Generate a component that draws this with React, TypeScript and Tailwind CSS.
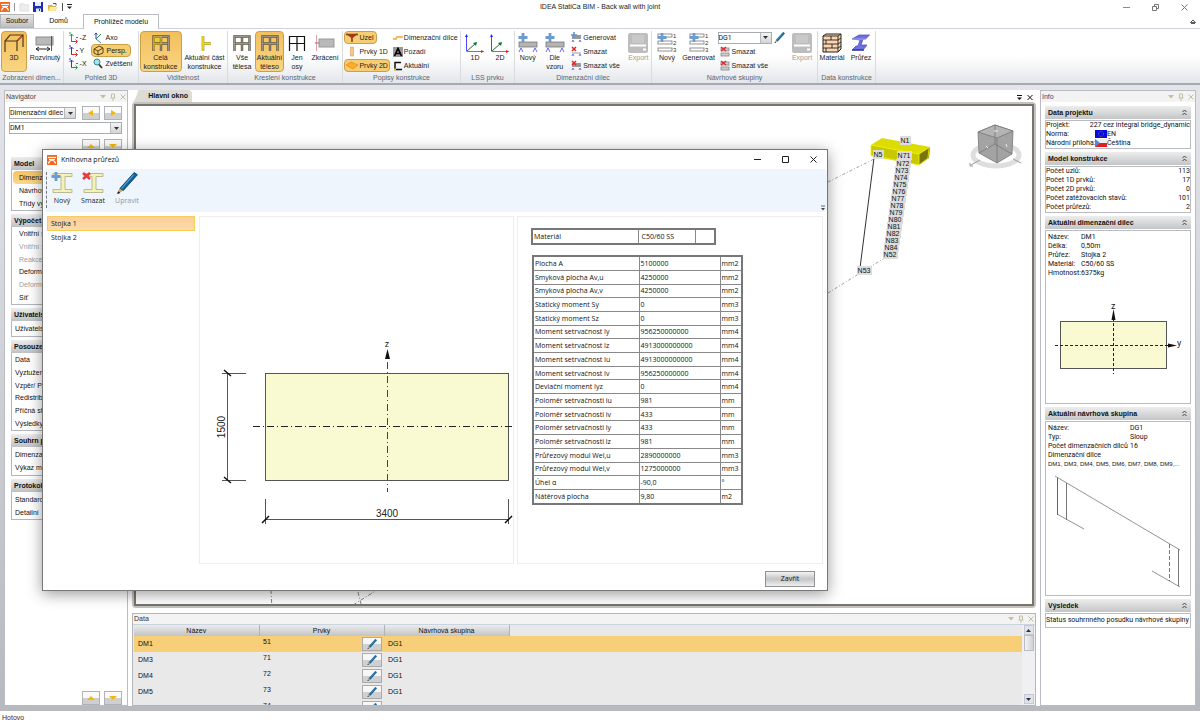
import React from 'react';

type IconProps = { children: React.ReactNode; w?: number; h?: number };

const Svg = ({ children, w = 20, h = 20 }: IconProps) => (
  <svg width={w} height={h} viewBox={`0 0 ${w} ${h}`} fill="none" className="shrink-0" aria-hidden="true">
    {children}
  </svg>
);

/* ---------- icons ---------- */

const Logo = () => (
  <Svg w={10} h={10}>
    <rect width="10" height="10" fill="#f26a21" />
    <path d="M1 2.500h8" stroke="#fff" strokeWidth="1.200" />
    <path d="M1.500 8.500C2 6.500 3.500 5.200 5 5c1.500 0.200 3 1.500 3.500 3.500M2 4.500h6" stroke="#fff" strokeWidth="1.100" />
  </Svg>
);

const PortalIcon = () => (
  <Svg>
    <path d="M1 19V8l5-6h13v12M1 8h12v10M13 8l6-6" stroke="#4a3a1e" strokeWidth="1.2" />
    <path d="M14 7l4-4" stroke="#e23a1c" strokeWidth="1.2" />
  </Svg>
);

const UnrolledIcon = () => (
  <Svg>
    <rect x="1" y="4" width="17" height="8" fill="#b9b9b9" stroke="#8d8d8d" />
    <path d="M1 16h14M4 14l-3 2 3 2M12 14l3 2-3 2" stroke="#222" />
    <path d="M16.500 3v15" stroke="#d22" />
  </Svg>
);

const AxisIcon = ({ up, side }: { up: string; side: string }) => (
  <Svg w={12} h={12}>
    <path d="M3.500 10V2M1.500 4l2-2 2 2M1 1h2" stroke={up} />
    <path d="M3 9.500h6M7.500 7.500l2 2-2 2" stroke={side} />
    <path d="M8 5.500h2" stroke={side} />
  </Svg>
);

const AxoIcon = () => (
  <Svg w={10} h={12}>
    <path d="M3 7V1M1.500 2.500L3 1l1.500 1.500" stroke="#33c" />
    <path d="M3 7l5-5" stroke="#2a8a4a" />
    <path d="M3 7l5 4" stroke="#48a" />
  </Svg>
);

const CubeIcon = () => (
  <Svg w={11} h={11}>
    <path d="M1 4l5-3 4 2v5l-5 2-4-2zM1 4l4 2 5-3M5 6v4" stroke="#5a4210" />
  </Svg>
);

const ZoomIcon = () => (
  <Svg w={10} h={11}>
    <circle cx="4" cy="4" r="3" fill="#9fe6ee" stroke="#3a8790" />
    <path d="M6 6.500l3 3.500" stroke="#333" strokeWidth="1.800" />
  </Svg>
);

const FrameIcon = ({ fill, thin }: { fill?: string; thin?: boolean }) => (
  <Svg>
    {fill && <path d="M3 4h7v7H3z" fill={fill} />}
    <path d="M2.500 18V3.500h15V18M2.500 10.500h15M10 3v15" stroke={thin ? '#111' : '#5c5646'} strokeWidth={thin ? 1.2 : 2.4} />
    {!thin && <path d="M2.500 18V3.500h15V18M2.500 10.500h15M10 3v15" stroke="#b5ae9b" strokeWidth="0.700" />}
    {fill && <path d="M3 17V4h7v7H3" stroke="#d6b400" strokeWidth="1.200" />}
  </Svg>
);

const PartIcon = () => (
  <Svg>
    <path d="M8 3v15M8 10.500h8" stroke="#a08c00" strokeWidth="2.600" />
    <path d="M8 3v15M8 10.500h8" stroke="#f2d92c" strokeWidth="1.600" />
  </Svg>
);

const ShortenIcon = () => (
  <Svg>
    <rect x="4" y="6" width="15" height="8" fill="#b9b9b9" stroke="#999" />
    <path d="M1.500 2v16" stroke="#e9a0a0" />
    <path d="M0 10h4" stroke="#777" />
  </Svg>
);

const NodeIcon = () => (
  <Svg w={12} h={11}>
    <path d="M0 2.500h12M6 3v7M1 2l5 3 5-3" stroke="#7b4a13" strokeWidth="1.600" />
    <circle cx="6" cy="4" r="2" fill="#d3201b" />
  </Svg>
);

const Member1DIcon = () => (
  <Svg w={12} h={11}>
    <rect x="4.500" y="1" width="3" height="9" fill="#f4c585" stroke="#dba060" strokeWidth="0.600" />
  </Svg>
);

const Member2DIcon = () => (
  <Svg w={12} h={11}>
    <path d="M0 5l5-3 7 3-5 4z" fill="#ffab2e" stroke="#e08a10" strokeWidth="0.700" />
  </Svg>
);

const MemberIcon = () => (
  <Svg w={11} h={10}>
    <path d="M0 6h3l1-2h6" stroke="#f5b964" strokeWidth="2" />
  </Svg>
);

const BackgroundIcon = () => (
  <Svg w={10} h={10}>
    <rect width="10" height="10" fill="#9a9a9a" />
    <path d="M1.500 9L5 1.500 8.500 9M3 6.500h4" stroke="#000" strokeWidth="1.700" />
  </Svg>
);

const ActiveIcon = () => (
  <Svg w={10} h={10}>
    <path d="M8 1.500H2v7h7" stroke="#111" strokeWidth="1.500" />
    <path d="M1 8.500h2" stroke="#e7c500" strokeWidth="2" />
  </Svg>
);

const TripodIcon = () => (
  <Svg>
    <path d="M1.500 18V2" stroke="#4a4af0" />
    <path d="M1.500 18.500h17" stroke="#f04a4a" />
    <path d="M2 18l9-8" stroke="#226c2c" />
    <path d="M0 4l1.500-3L3 4z" fill="#22f" />
    <path d="M16 17l3 1.500-3 1.500z" fill="#f11" />
    <path d="M8 10l4-1-1 4z" fill="#074" />
  </Svg>
);

const Plus = () => <path d="M5 0v9M0.500 4.500h9" stroke="#6b9bd1" strokeWidth="2.800" />;
const Cross = () => <path d="M1 1l7 6M8 1L1 7" stroke="#ea3a3e" strokeWidth="2.600" />;

const BeamIcon = () => (
  <Svg>
    <rect x="1" y="9" width="18" height="5" fill="#b4b4b4" stroke="#777" strokeWidth="0.800" />
    <path d="M1 19l2-4 2 4M15 19l2-4 2 4" stroke="#55e" strokeWidth="0.900" />
    <Plus />
  </Svg>
);

const SmallBeamIcon = ({ kind }: { kind: 'add' | 'del' | 'all' }) => (
  <Svg w={11} h={11}>
    {kind === 'del' ? <path d="M1 7h9" stroke="#999" /> : <rect x="1" y="3" width="9" height="4" fill="#999" />}
    <path d="M1 10l1-2 1 2M8 10l1-2 1 2" stroke="#55e" strokeWidth="0.800" />
    {kind === 'add' ? <path d="M3 0v6M0 3h6" stroke="#5f94cf" strokeWidth="1.600" /> : <path d="M1 1l4 4M5 1L1 5" stroke="#e3262b" strokeWidth="1.500" />}
  </Svg>
);

const ExportIcon = () => (
  <Svg>
    <rect width="20" height="20" rx="2" fill="#bdbdbd" />
    <path d="M4 2h12v8H4z" fill="#c9c9c9" />
    <path d="M2 12.500h16" stroke="#fff" strokeWidth="2" />
    <path d="M15 16.500h3" stroke="#fff" strokeWidth="2" />
  </Svg>
);

const GroupsIcon = () => (
  <Svg>
    {[3, 10, 17].map((y, i) => (
      <g key={y}>
        <rect x="1" y={y - 2} width="14" height="3" fill="#fff" stroke="#777" strokeWidth="0.800" />
        <text x="16" y={y + 2} fontSize="6" fill="#333">{i + 1}</text>
      </g>
    ))}
    <Plus />
  </Svg>
);

const GroupDeleteIcon = () => (
  <Svg w={11} h={11}>
    <rect x="1" y="2" width="8" height="3" fill="#ccc" stroke="#888" strokeWidth="0.800" />
    <rect x="1" y="7" width="8" height="3" fill="#ccc" stroke="#888" strokeWidth="0.800" />
    <path d="M1 1l5 4M6 1L1 5" stroke="#e3262b" strokeWidth="1.400" />
  </Svg>
);

const PencilIcon = ({ size = 11 }: { size?: number }) => (
  <svg width={size} height={size} viewBox="0 0 20 20" className="shrink-0" aria-hidden="true">
    <path d="M16.500 0.500l3 2L6.500 17l-3-2z" fill="#12659c" stroke="#0b4169" strokeWidth="0.800" />
    <path d="M16 2.500L5 15" stroke="#5ba6d8" />
    <path d="M3 15l3.500 2L1 20z" fill="#c9a46a" />
    <path d="M2 17.500L4 19l-3 1z" fill="#111" />
  </svg>
);

const BrickIcon = () => (
  <Svg>
    <path d="M1 3l3-2h15v15l-3 3H1z" fill="#fcd5b0" stroke="#222" />
    <path d="M1 7h15M1 11h15M1 15h15M16 3v16M1 3h15M9 3v4M4 7v4M10 11v4M4 15v4M16 7l3-2M16 11l3-2M16 15l3-2M16 3l3-2" stroke="#222" strokeWidth="0.900" />
  </Svg>
);

const ProfileIcon = () => (
  <Svg>
    <path d="M1 6l7-4h11l-4 4h-3l-2 6h6l-4 5H1l4-4h2l2-6z" fill="#6f6fe0" stroke="#4545b4" strokeWidth="0.700" />
    <path d="M1 6h14l4-4" stroke="#a9a9f5" />
    <path d="M1 17h12" stroke="#3a3aa0" strokeWidth="1.500" />
  </Svg>
);

const SectionIcon = ({ mark }: { mark: 'add' | 'del' }) => (
  <Svg w={23} h={22}>
    <path d="M2 1.500h19v3h-7v13h7v3H2v-3h8v-13H2z" fill="#f4f2b4" stroke="#b5b38c" strokeWidth="0.900" />
    {mark === 'add' ? <Plus /> : <Cross />}
  </Svg>
);

const Triangle = ({ d, color = '#333' }: { d: 'up' | 'down' | 'left' | 'right'; color?: string }) => {
  const path = { up: 'M0 5l4-4 4 4z', down: 'M0 1h8L4 5z', left: 'M1 3l5-3v6z', right: 'M7 3L2 0v6z' }[d];
  return (
    <svg width="8" height="6" viewBox="0 0 8 6" aria-hidden="true"><path d={path} fill={color} /></svg>
  );
};

const Caret = () => (
  <svg width="5" height="3" viewBox="0 0 5 3" aria-hidden="true"><path d="M0 0h5L2.500 3z" fill="#333" /></svg>
);

const PaneTools = () => (
  <div className="flex items-center gap-1">
    <button aria-label="Menu"><svg width="6" height="8" viewBox="0 0 6 8"><path d="M0 2h6L3 5.500z" fill="#c3bfa3" /></svg></button>
    <button aria-label="Pin"><svg width="6" height="8" viewBox="0 0 6 8" fill="none"><path d="M1.500 5V1h3v4M0.500 5h5M3 5v3" stroke="#c3bfa3" /></svg></button>
    <button aria-label="Close pane"><svg width="6" height="8" viewBox="0 0 6 8"><path d="M0.500 1.500l5 5M5.500 1.500l-5 5" stroke="#c3bfa3" /></svg></button>
  </div>
);

/* ---------- controls ---------- */

const Combo = ({ label, value, className = '' }: { label: string; value: string; className?: string }) => (
  <div className={`relative flex h-3 border border-[#a9adb2] bg-white ${className}`}>
    <select aria-label={label} className="w-full appearance-none bg-transparent font-['Roboto',sans-serif] text-[7px] leading-[10px] outline-none">
      <option>{value}</option>
    </select>
    <span className="pointer-events-none absolute inset-y-0 right-0 flex w-[11px] items-center justify-center border-l border-[#b6b9bd] bg-gradient-to-b from-[#f4f4f4] to-[#d2d4d6]">
      <Caret />
    </span>
  </div>
);

const RibbonGroup = ({ title, className, children }: { title: string; className: string; children: React.ReactNode }) => (
  <section className={`flex shrink-0 flex-col border-r border-[#d9dbdf] ${className}`}>
    <div className="flex h-[41px] justify-center gap-px">{children}</div>
    <h2 className="truncate text-center leading-[11px] text-[#5b6472]">{title}</h2>
  </section>
);

type BtnProps = { label: string; icon: React.ReactNode; on?: boolean; off?: boolean; className?: string };

const BigButton = ({ label, icon, on, off, className = '' }: BtnProps) => (
  <button
    className={`flex flex-col items-center border pt-px leading-[9px] ${on ? 'rounded-sm border-[#c9a044] bg-gradient-to-b from-[#f3bf5c] to-[#f9d582]' : 'border-transparent'} ${off ? 'text-[#9b9b9b]' : 'text-[#222]'} ${className}`}
  >
    {icon}
    <span>{label}</span>
  </button>
);

const SmallButton = ({ label, icon, on, className = '' }: BtnProps) => (
  <button
    className={`flex h-[13px] items-center self-start whitespace-nowrap border pl-px leading-[9px] text-[#222] ${on ? 'rounded-sm border-[#c9a044] bg-[#f7cd74]' : 'border-transparent'} ${className}`}
  >
    {icon}
    <span>{label}</span>
  </button>
);

const ArrowButton = ({ d, label }: { d: 'up' | 'down' | 'left' | 'right'; label: string }) => (
  <button aria-label={label} className="flex h-[14px] w-[18px] items-center justify-center border border-[#b0b2b5] bg-gradient-to-b from-[#fafafa] from-50% to-[#cfcfcf] to-50%">
    <Triangle d={d} color="#f2b90c" />
  </button>
);

const Ribbon = () => (
  <div className="flex border-b-2 border-[#a6aab0] bg-gradient-to-b from-white via-white to-[#e3e6ea] pt-[2px]">
    <RibbonGroup title="Zobrazení dimen..." className="w-16">
      <BigButton on label="3D" icon={<PortalIcon />} className="w-[26px]" />
      <BigButton label="Rozvinutý" icon={<UnrolledIcon />} className="w-[34px]" />
    </RibbonGroup>
    <RibbonGroup title="Pohled 3D" className="w-[75px]">
      <div className="flex flex-col">
        <SmallButton label="-Z" icon={<AxisIcon up="#2a9a4a" side="#d33" />} className="w-6" />
        <SmallButton label="Y" icon={<AxisIcon up="#33c" side="#d33" />} className="w-6" />
        <SmallButton label="-X" icon={<AxisIcon up="#33c" side="#2a9a4a" />} className="w-6" />
      </div>
      <div className="flex flex-col">
        <SmallButton label="Axo" icon={<AxoIcon />} className="gap-[3px]" />
        <SmallButton on label="Persp." icon={<CubeIcon />} className="gap-[3px] pr-[3px]" />
        <SmallButton label="Zvětšení" icon={<ZoomIcon />} className="gap-[3px] pr-[3px]" />
      </div>
    </RibbonGroup>
    <RibbonGroup title="Viditelnost" className="w-[89px]">
      <BigButton on label="Celá konstrukce" icon={<FrameIcon fill="#f0c93a" />} className="w-[42px]" />
      <BigButton label="Aktuální část konstrukce" icon={<PartIcon />} className="w-[44px]" />
    </RibbonGroup>
    <RibbonGroup title="Kreslení konstrukce" className="w-[115px]">
      <BigButton label="Vše tělesa" icon={<FrameIcon />} className="w-6" />
      <BigButton on label="Aktuální těleso" icon={<FrameIcon />} className="w-[29px]" />
      <BigButton label="Jen osy" icon={<FrameIcon thin />} className="w-6 px-1" />
      <BigButton label="Zkrácení" icon={<ShortenIcon />} className="w-[30px]" />
    </RibbonGroup>
    <RibbonGroup title="Popisy konstrukce" className="w-[118px]">
      <div className="flex flex-col gap-px">
        <SmallButton on label="Uzel" icon={<NodeIcon />} className="gap-px pr-[3px]" />
        <SmallButton label="Prvky 1D" icon={<Member1DIcon />} className="gap-px" />
        <SmallButton on label="Prvky 2D" icon={<Member2DIcon />} className="gap-px pr-px" />
      </div>
      <div className="flex flex-col gap-px">
        <SmallButton label="Dimenzační dílce" icon={<MemberIcon />} />
        <SmallButton label="Pozadí" icon={<BackgroundIcon />} className="gap-px" />
        <SmallButton label="Aktuální" icon={<ActiveIcon />} className="gap-px" />
      </div>
    </RibbonGroup>
    <RibbonGroup title="LSS prvku" className="w-[54px]">
      <BigButton label="1D" icon={<TripodIcon />} className="w-6" />
      <BigButton label="2D" icon={<TripodIcon />} className="w-6" />
    </RibbonGroup>
    <RibbonGroup title="Dimenzační dílec" className="w-[137px]">
      <BigButton label="Nový" icon={<BeamIcon />} className="w-[25px]" />
      <BigButton label="Dle vzoru" icon={<BeamIcon />} className="w-[27px] px-1" />
      <div className="flex flex-col gap-px">
        <SmallButton label="Generovat" icon={<SmallBeamIcon kind="add" />} className="gap-px" />
        <SmallButton label="Smazat" icon={<SmallBeamIcon kind="del" />} className="gap-px" />
        <SmallButton label="Smazat vše" icon={<SmallBeamIcon kind="all" />} className="gap-px pr-1" />
      </div>
      <BigButton off label="Export" icon={<ExportIcon />} className="w-[25px]" />
    </RibbonGroup>
    <RibbonGroup title="Návrhové skupiny" className="w-[166px]">
      <BigButton label="Nový" icon={<GroupsIcon />} className="w-[25px]" />
      <BigButton label="Generovat" icon={<GroupsIcon />} className="w-[36px]" />
      <div className="flex flex-col gap-px">
        <div className="flex h-[13px] items-center gap-[2px]">
          <Combo label="Návrhová skupina" value="DG1" className="w-[54px]" />
          <button aria-label="Přejmenovat"><PencilIcon /></button>
        </div>
        <SmallButton label="Smazat" icon={<GroupDeleteIcon />} className="gap-px" />
        <SmallButton label="Smazat vše" icon={<GroupDeleteIcon />} className="gap-px" />
      </div>
      <BigButton off label="Export" icon={<ExportIcon />} className="ml-1 w-[25px]" />
    </RibbonGroup>
    <RibbonGroup title="Data konstrukce" className="w-[58px]">
      <BigButton label="Materiál" icon={<BrickIcon />} className="w-7" />
      <BigButton label="Průřez" icon={<ProfileIcon />} className="w-7" />
    </RibbonGroup>
  </div>
);

const TitleBar = () => (
  <header className="relative grid h-[14px] grid-cols-[1fr_auto_1fr] items-center">
    <div className="flex items-center gap-1">
      <Logo />
      <span className="h-2 w-px bg-[#999]" />
      <button aria-label="Nový projekt"><Svg w={10} h={10}><path d="M1 2h4l1 1h4v6H1z" fill="#ededed" stroke="#ddd" /></Svg></button>
      <button aria-label="Uložit">
        <Svg w={10} h={10}><path d="M0 0h10v10H0z" fill="#1d2fae" /><path d="M2 0h6v4H2zM3 6.500h5V10H3z" fill="#e8ecff" /><path d="M6 7h1v2H6z" fill="#1d2fae" /></Svg>
      </button>
      <button aria-label="Otevřít">
        <Svg w={11} h={10}><path d="M1 3h4l1 1h3v5H1z" fill="#d9b64b" /><path d="M1 9l2-4h8L8.500 9z" fill="#ffe89a" /><path d="M6 1.500h3v2" stroke="#555" /></Svg>
      </button>
      <span className="h-2 w-px bg-[#555]" />
      <button aria-label="Panel rychlého přístupu"><Svg w={5} h={6}><path d="M0 0.500h5" stroke="#222" /><path d="M0 2.500h5L2.500 5z" fill="#222" /></Svg></button>
    </div>
    <h1 className="text-[#222]">IDEA StatiCa BIM - Back wall with joint</h1>
    <div className="flex items-end justify-end gap-[22px] pr-3">
      <button aria-label="Minimalizovat"><Svg w={7} h={7}><path d="M0 3.500h7" stroke="#8a8a8a" /></Svg></button>
      <button aria-label="Obnovit"><Svg w={7} h={7}><path d="M0.500 2.500h4v4h-4zM2.500 2V0.500h4v4H5" stroke="#777" /></Svg></button>
      <button aria-label="Zavřít okno"><Svg w={7} h={7}><path d="M0.500 0.500l6 6M6.500 0.500l-6 6" stroke="#777" /></Svg></button>
    </div>
  </header>
);

const Tabs = () => (
  <nav className="flex h-[15px] items-end border-b border-[#cfd2d6] pr-1">
    <button className="h-[14px] w-[34px] border border-[#b3b5b8] bg-gradient-to-b from-[#e6e6e6] to-[#bdbfc2]">Soubor</button>
    <button className="h-[15px] w-[49px]">Domů</button>
    <button className="-mb-px h-[15px] w-[76px] border border-b-0 border-[#b9bcc2] bg-white">Prohlížeč modelu</button>
    <button aria-label="Sbalit pás karet" className="mb-1 ml-auto"><Svg w={6} h={5}><path d="M0.500 3.500L3 1l2.500 2.500zM1 4.500h4" stroke="#333" strokeWidth="0.800" /></Svg></button>
  </nav>
);

/* ---------- left pane ---------- */

const navSections = [
  { title: 'Model', box: 'h-[41px] pl-[7px]', items: ['Dimenzační dílce', 'Návrhové skupiny', 'Třídy výztuže'], active: 0 },
  { title: 'Výpočet', box: 'h-[78px] pl-[7px]', items: ['Vnitřní síly', 'Vnitřní síly - obálky', 'Reakce', 'Deformace', 'Deformace - obálky', 'Síť'], dim: [1, 2, 4] },
  { title: 'Uživatelské vstupy', box: 'h-4 pl-[3px]', items: ['Uživatelské vstupy'] },
  { title: 'Posouzení', box: 'h-[78px] pl-[3px]', items: ['Data', 'Vyztužení', 'Vzpěr/ Průhyb', 'Redistribuce', 'Příčná stabilita', 'Výsledky'] },
  { title: 'Souhrn posouzení', box: 'h-[29px] pl-[3px]', items: ['Dimenzační dílce', 'Výkaz materiálu'] },
  { title: 'Protokol', box: 'h-[28px] pl-[3px]', items: ['Standardní', 'Detailní'] },
];

const Navigator = () => (
  <aside className="flex w-[124px] shrink-0 flex-col border border-[#b9bcc2] bg-white">
    <div className="flex h-[11px] items-center justify-between bg-[#f3f3f3] px-px text-[#444]">
      <span>Navigátor</span>
      <PaneTools />
    </div>
    <div className="flex items-center pl-1 pr-[5px] pt-1">
      <Combo label="Typ" value="Dimenzační dílec" className="w-[67px]" />
      <div className="ml-auto flex gap-1">
        <ArrowButton d="left" label="Předchozí" />
        <ArrowButton d="right" label="Další" />
      </div>
    </div>
    <div className="pl-1 pr-[5px] pt-[2px]">
      <Combo label="Dílec" value="DM1" />
    </div>
    <div className="flex justify-end gap-1 pr-[5px] pt-[5px]">
      <ArrowButton d="up" label="Nahoru" />
      <ArrowButton d="down" label="Dolů" />
    </div>
    <div className="flex flex-col gap-[3px] px-[6px] pt-1">
      {navSections.map((s) => (
        <section key={s.title}>
          <h2 className="h-[13px] bg-gradient-to-b from-[#ededed] to-[#bfc1c4] pl-[3px] font-bold leading-[13px]">{s.title}</h2>
          <ul className={`flex flex-col border border-t-0 border-[#b3b7bd] pt-px ${s.box}`}>
            {s.items.map((item, i) => (
              <li key={item} className="min-h-0 flex-1">
                <button
                  className={`block h-full whitespace-nowrap leading-[12px] ${i === s.active ? '-ml-[6px] w-[105px] rounded-sm bg-gradient-to-b from-[#f6c25f] to-[#fad88a] pl-[6px] text-left' : ''} ${s.dim?.includes(i) ? 'text-[#a0a0a0]' : 'text-[#111]'}`}
                >
                  {item}
                </button>
              </li>
            ))}
          </ul>
        </section>
      ))}
    </div>
    <div className="mt-auto flex justify-end gap-1 pr-[5px]">
      <ArrowButton d="up" label="Předchozí sekce" />
      <ArrowButton d="down" label="Další sekce" />
    </div>
  </aside>
);

/* ---------- main view ---------- */

const nodes: [string, number, number][] = [
  ['N5', 742, 48], ['N1', 769, 34], ['N71', 768, 49], ['N72', 767, 57], ['N73', 766, 64], ['N74', 765, 71], ['N75', 764, 78],
  ['N76', 763, 85], ['N77', 762, 92], ['N78', 761, 99], ['N79', 760, 106], ['N80', 759, 113], ['N81', 758, 120],
  ['N82', 757, 127], ['N83', 756, 134], ['N52', 754, 148], ['N84', 755, 141], ['N53', 728, 164],
];

const ModelView = () => (
  <svg width="100%" height="100%" className="block" role="img" aria-label="Model konstrukce">
    <path d="M692 76L738 53M692 187L755 148" stroke="#888" strokeWidth="0.800" strokeDasharray="3 2 1 2" />
    <path d="M738 52L724 162" stroke="#333" />
    <path d="M135 484l1 20M222 486l3 12M217 499l24-15" stroke="#666" strokeWidth="0.800" strokeDasharray="4 2 1 2" />
    <path d="M735 39l11-7 48 9-11 7-48-9z" fill="#dcdc00" />
    <path d="M735 39l48 9v11l-48-9z" fill="#c8c800" />
    <path d="M783 48l11-7-1 11-10 7z" fill="#77760a" />
    <path d="M735 39l48 9 11-7M783 48v11l9-7 1-10M735 39v10l48 10" stroke="#f2f200" fill="none" strokeWidth="0.800" />
    {nodes.map(([name, x, y]) => (
      <g key={name}>
        <rect x={x - (name.length > 2 ? 7 : 5)} y={y - 4} width={name.length > 2 ? 15 : 11} height="9" fill="#dcdcdc" />
        <text x={x} y={y + 3} textAnchor="middle" fontSize="7" fill="#111">{name}</text>
      </g>
    ))}
    <ellipse cx="860" cy="49" rx="23" ry="11" fill="none" stroke="#dedede" strokeWidth="5" />
    <path d="M835 59l9-5M885 57l-8-4M834 57v3h3" stroke="#999" fill="none" />
    <path d="M842 26l17-7 18 6-1 23-15 9-18-10z" fill="#a3a3a3" stroke="#777" strokeWidth="0.800" />
    <path d="M842 26l17-7 18 6-16 7z" fill="#b4b4b4" stroke="#777" strokeWidth="0.800" />
    <path d="M861 32v25M859 19v19l-16 9M859 38l17 10" stroke="#777" strokeWidth="0.800" fill="none" />
    <path d="M858 25h4M850 40l2 2M870 38l1 3" stroke="#eee" />
  </svg>
);

const rows = [
  ['DM1', '51', 'DG1'],
  ['DM3', '71', 'DG1'],
  ['DM4', '72', 'DG1'],
  ['DM5', '73', 'DG1'],
  ['DM6', '74', 'DG1'],
];

const DataPane = () => (
  <section className="mt-[5px] flex h-[93px] flex-col border border-[#b3b7bd] bg-[#e9e9e9]">
    <div className="flex h-[11px] shrink-0 items-center justify-between border-b border-[#c9d3e2] bg-[#f3f3f3] px-px text-[#333]">
      <h2>Data</h2>
      <PaneTools />
    </div>
    <div className="flex min-h-0 flex-1 pl-px">
      <div className="min-w-0 flex-1 overflow-hidden">
        <table className="w-full table-fixed border-collapse text-left">
          <thead>
            <tr className="h-[11px]">
              <th className="w-[125px] border-r border-[#b0b2b6] bg-gradient-to-b from-[#ececec] to-[#c2c3c5] p-0 text-center font-normal leading-[9px]">Název</th>
              <th className="w-[125px] border-r border-[#b0b2b6] bg-gradient-to-b from-[#ececec] to-[#c2c3c5] p-0 text-center font-normal leading-[9px]">Prvky</th>
              <th className="w-[125px] border-r border-[#b0b2b6] bg-gradient-to-b from-[#ececec] to-[#c2c3c5] p-0 text-center font-normal leading-[9px]">Návrhová skupina</th>
              <th className="p-0" />
            </tr>
          </thead>
          <tbody>
            {rows.map(([name, member, group], i) => (
              <tr key={name} className={`h-4 ${i === 0 ? 'bg-[#f6cf78]' : ''}`}>
                <td className="p-0 pl-1 leading-[14px]">{name}</td>
                <td className="p-0 pl-1">
                  <div className="flex h-4 items-center justify-between pr-[2px]">
                    <span className="self-start leading-[12px]">{member}</span>
                    <button aria-label={`Upravit ${name}`} className="flex h-[14px] w-5 items-center justify-center border border-[#a9abae] bg-gradient-to-b from-[#f7f7f7] from-50% to-[#cfcfcf] to-50%">
                      <PencilIcon size={10} />
                    </button>
                  </div>
                </td>
                <td className="p-0 pl-1 leading-[14px]">{group}</td>
                <td className="p-0" />
              </tr>
            ))}
          </tbody>
        </table>
      </div>
      <div className="flex w-[13px] shrink-0 flex-col items-center bg-[#f0f0f2] pb-px">
        <button aria-label="Posunout nahoru" className="flex h-[10px] w-[10px] items-center justify-center border border-[#c3c9d4] bg-[#e0e4ea]"><span className="rotate-180"><Caret /></span></button>
        <span className="h-4 w-[10px] border border-[#b9bcc2] bg-gradient-to-r from-[#f4f4f4] to-[#cfd1d4]" />
        <button aria-label="Posunout dolů" className="mt-auto flex h-[10px] w-[10px] items-center justify-center border border-[#c3c9d4] bg-[#e0e4ea]"><Caret /></button>
      </div>
    </div>
  </section>
);

/* ---------- info pane ---------- */

const InfoSection = ({ title, className, children }: { title: string; className: string; children: React.ReactNode }) => (
  <section>
    <h2 className="flex h-[13px] items-center justify-between bg-gradient-to-b from-[#ededed] to-[#c3c5c7] pl-[3px] pr-1 font-bold">
      {title}
      <Svg w={5} h={7}><path d="M0.500 3L2.500 1l2 2M0.500 6l2-2 2 2" stroke="#333" strokeWidth="0.900" /></Svg>
    </h2>
    <div className={`mt-px overflow-hidden whitespace-nowrap border border-[#b9bcc2] font-['Roboto',sans-serif] leading-[9px] ${className}`}>{children}</div>
  </section>
);

const counts = [['Počet uzlů:', '113'], ['Počet 1D prvků:', '17'], ['Počet 2D prvků:', '0'], ['Počet zatěžovacích stavů:', '101'], ['Počet průřezů:', '2']];
const member = [['Název:', 'DM1'], ['Délka:', '0,50m'], ['Průřez:', 'Stojka 2'], ['Materiál:', 'C50/60 SS'], ['Hmotnost:', '6375kg']];

const InfoPane = () => (
  <aside className="flex w-[156px] shrink-0 flex-col border border-[#b9bcc2] bg-white">
    <div className="flex h-[11px] items-center justify-between bg-[#f3f3f3] px-px text-[#2b4a78]">
      <span>Info</span>
      <PaneTools />
    </div>
    <div className="flex flex-col gap-[3px] px-1 pt-1">
      <InfoSection title="Data projektu" className="h-[29px]">
        <dl>
          <div className="flex justify-between">
            <dt>Projekt:</dt>
            <dd>227 cez integral bridge_dynamic</dd>
          </div>
          <div className="grid grid-cols-[49px_1fr]">
            <dt>Norma:</dt>
            <dd className="flex">
              <Svg w={12} h={9}><rect width="12" height="8" fill="#0a0ae0" /><circle cx="6" cy="4" r="2.500" stroke="#8a8a30" strokeWidth="0.800" strokeDasharray="1 1" /></Svg>
              EN
            </dd>
            <dt>Národní příloha:</dt>
            <dd className="flex">
              <Svg w={12} h={9}><rect width="12" height="4" fill="#eee" /><rect y="4" width="12" height="4" fill="#e02020" /><path d="M0 0l5 4-5 4z" fill="#4a8ad8" /></Svg>
              Čeština
            </dd>
          </div>
        </dl>
      </InfoSection>
      <InfoSection title="Model konstrukce" className="h-[47px]">
        {counts.map(([k, v]) => (
          <div key={k} className="flex justify-between"><span>{k}</span><span>{v}</span></div>
        ))}
      </InfoSection>
      <InfoSection title="Aktuální dimenzační dílec" className="h-[174px] pl-[2px] pt-[2px]">
        <dl className="grid grid-cols-[33px_1fr]">
          {member.map(([k, v]) => (
            <React.Fragment key={k}><dt>{k}</dt><dd>{v}</dd></React.Fragment>
          ))}
        </dl>
        <svg width="140" height="96" viewBox="0 0 140 96" className="mt-5" role="img" aria-label="Průřez dílce">
          <rect x="12.500" y="23.500" width="106" height="47" fill="#f9f9d2" stroke="#555" />
          <path d="M7 47.500h113M65.500 20v56" stroke="#222" strokeDasharray="3 2" />
          <path d="M65.500 11l-2 11h4zM129 47.500l-9-2v4z" fill="#111" />
          <text x="63" y="11" fontSize="9" fill="#222">z</text>
          <text x="129" y="48" fontSize="9" fill="#222">y</text>
        </svg>
      </InfoSection>
      <InfoSection title="Aktuální návrhová skupina" className="h-[175px] pl-[2px] pt-[2px]">
        <dl className="grid grid-cols-[82px_1fr]">
          <dt>Název:</dt><dd>DG1</dd>
          <dt>Typ:</dt><dd>Sloup</dd>
          <dt>Počet dimenzačních dílců</dt><dd>16</dd>
        </dl>
        <p>Dimenzační dílce</p>
        <p className="font-['Liberation_Sans',sans-serif] text-[6px]">DM1, DM3, DM4, DM5, DM6, DM7, DM8, DM9,...</p>
        <svg width="140" height="120" viewBox="0 0 140 120" className="mt-1" role="img" aria-label="Schéma skupiny" fill="none" stroke="#777">
          <path d="M7 3l125 74M9 41l27 15M104 98l28 16" strokeWidth="0.800" />
          <path d="M18.500 10v37M130.500 76v37" />
          <path d="M121.500 71v37" strokeDasharray="4 2" />
          <path d="M9.500 5v37" stroke="#e03030" />
        </svg>
      </InfoSection>
      <InfoSection title="Výsledek" className="h-[15px] pt-[2px]">
        Status souhrnného posudku návrhové skupiny
      </InfoSection>
    </div>
  </aside>
);

/* ---------- cross-section dialog ---------- */

const properties = [
  ['Plocha A', '5100000', 'mm2'],
  ['Smyková plocha Av,u', '4250000', 'mm2'],
  ['Smyková plocha Av,v', '4250000', 'mm2'],
  ['Statický moment Sy', '0', 'mm3'],
  ['Statický moment Sz', '0', 'mm3'],
  ['Moment setrvačnost Iy', '956250000000', 'mm4'],
  ['Moment setrvačnost Iz', '4913000000000', 'mm4'],
  ['Moment setrvačnost Iu', '4913000000000', 'mm4'],
  ['Moment setrvačnost Iv', '956250000000', 'mm4'],
  ['Deviační moment Iyz', '0', 'mm4'],
  ['Poloměr setrvačnosti iu', '981', 'mm'],
  ['Poloměr setrvačnosti iv', '433', 'mm'],
  ['Poloměr setrvačnosti iy', '433', 'mm'],
  ['Poloměr setrvačnosti iz', '981', 'mm'],
  ['Průřezový modul Wel,u', '2890000000', 'mm3'],
  ['Průřezový modul Wel,v', '1275000000', 'mm3'],
  ['Úhel α', '-90,0', '°'],
  ['Nátěrová plocha', '9,80', 'm2'],
];

const SectionDrawing = () => (
  <svg width="313" height="346" viewBox="0 0 313 346" role="img" aria-label="Průřez Stojka 1" className="font-['Liberation_Sans',sans-serif]">
    <rect x="65.500" y="156.500" width="243" height="107" fill="#f9f9d2" stroke="#555" />
    <path d="M53 209.500h260" stroke="#222" strokeDasharray="7 3 1 3" />
    <path d="M187.500 145v130" stroke="#444" strokeDasharray="7 3 1 3" />
    <path d="M187.500 132l-2.500 10h5z" fill="#111" />
    <path d="M27.500 156v107M22 156.500h24M22 263.500h24M65.500 282v25M308.500 282v25M65 302.500h244" stroke="#555" />
    <path d="M24 153l7 6M24 260l7 6M62 306l7-7M305 306l7-7" stroke="#111" strokeWidth="1.500" />
    <text x="187" y="130" textAnchor="middle" fontSize="9" fill="#222">z</text>
    <text x="187" y="300" textAnchor="middle" fontSize="10" fill="#222">3400</text>
    <text transform="translate(25 210) rotate(-90)" textAnchor="middle" fontSize="10" fill="#222">1500</text>
  </svg>
);

const ToolButton = ({ label, icon, off }: BtnProps) => (
  <button className={`flex w-[26px] flex-col items-center gap-[2px] leading-[10px] ${off ? 'text-[#8f959b]' : 'text-[#222]'}`}>
    {icon}
    {label}
  </button>
);

const SectionDialog = () => (
  <div role="dialog" aria-label="Knihovna průřezů" className="absolute left-[42px] top-[149px] flex w-[786px] flex-col border border-[#777] bg-white font-['Open_Sans','Noto_Sans',sans-serif] shadow-[0_3px_14px_rgba(0,0,0,0.4)]">
    <div className="flex h-[19px] items-center gap-1 pl-1 pr-[10px]">
      <Logo />
      <h2 className="mr-auto">Knihovna průřezů</h2>
      <div className="flex gap-[21px]">
        <button aria-label="Minimalizovat dialog"><Svg w={7} h={7}><path d="M0 3.500h7" stroke="#222" /></Svg></button>
        <button aria-label="Maximalizovat dialog"><Svg w={7} h={7}><path d="M0.500 0.500h6v6h-6z" stroke="#222" /></Svg></button>
        <button aria-label="Zavřít dialog"><Svg w={7} h={7}><path d="M0.500 0.500l6 6M6.500 0.500l-6 6" stroke="#222" /></Svg></button>
      </div>
    </div>
    <div className="ml-px flex h-[43px] items-start gap-[5px] rounded-sm bg-[#eff5fd] pl-[2px] pt-[3px]">
      <span className="mr-[-3px] h-9 border-l border-dashed border-[#777]" />
      <ToolButton label="Nový" icon={<SectionIcon mark="add" />} />
      <ToolButton label="Smazat" icon={<SectionIcon mark="del" />} />
      <span className="pl-[3px]"><ToolButton off label="Upravit" icon={<PencilIcon size={22} />} /></span>
      <button aria-label="Další příkazy" className="mb-px ml-auto mr-[2px] self-end"><Svg w={4} h={6}><path d="M0 1h4" stroke="#444" strokeWidth="0.800" /><path d="M0 3h4L2 5.500z" fill="#444" /></Svg></button>
    </div>
    <div className="flex px-1 pt-1">
      <ul className="w-[148px]">
        <li><button className="block h-[15px] w-full border border-[#f5cf5d] bg-gradient-to-b from-[#fdce9a] to-[#fbdcaa] pl-[3px] text-left leading-[13px]">Stojka 1</button></li>
        <li><button className="block h-[14px] w-full pl-1 text-left leading-[14px]">Stojka 2</button></li>
      </ul>
      <div className="ml-1 w-[315px] border border-[#eee]"><SectionDrawing /></div>
      <div className="ml-[3px] flex-1 border border-[#eee] pl-[13px] pt-[11px]">
        <table className="w-[185px] table-fixed border-collapse border-2 border-[#777]">
          <tbody>
            <tr className="h-[15px]">
              <td className="w-[106px] border border-[#888] p-0 pl-px leading-[9px]">Materiál</td>
              <td className="border border-[#888] p-0 pl-[3px] leading-[9px]">C50/60 SS</td>
              <td className="w-5 border border-[#888] p-0" />
            </tr>
          </tbody>
        </table>
        <table className="ml-px mt-[10px] h-[250px] w-[211px] table-fixed border-collapse border-2 border-[#777]">
          <tbody>
            {properties.map(([name, value, unit]) => (
              <tr key={name}>
                <td className="w-[106px] border border-[#888] p-0 pl-px leading-[9px]">{name}</td>
                <td className="border border-[#888] p-0 pl-px leading-[9px]">{value}</td>
                <td className="w-[22px] border border-[#888] p-0 pl-px leading-[9px]">{unit}</td>
              </tr>
            ))}
          </tbody>
        </table>
      </div>
    </div>
    <div className="flex justify-end pb-[3px] pr-3 pt-[7px]">
      <button className="h-4 w-[50px] border border-[#8f9194] bg-gradient-to-b from-[#f4f4f4] via-[#c4c4c4] to-[#f0f0f0] leading-[12px]">Zavřít</button>
    </div>
  </div>
);

const App: React.FC = () => {
  return (
    <div className="relative flex h-screen w-full flex-col overflow-hidden bg-white font-['Liberation_Sans',Arial,sans-serif] text-[7px] leading-[10px] text-[#111]">
      <TitleBar />
      <Tabs />
      <Ribbon />
      <main className="flex min-h-0 flex-1 flex-col bg-gradient-to-b from-[#e3e5ea] to-[#b6babf] px-1 pb-[5px] pt-[5px]">
        <div className="flex min-h-0 flex-1 gap-1 bg-white">
          <Navigator />
          <div className="flex min-w-0 flex-1 flex-col">
            <div className="flex h-[12px] shrink-0 items-end justify-between">
              <svg width="8" height="12" viewBox="0 0 8 12" aria-hidden="true"><path d="M0 12Q3 11 5 4T8 0v12z" fill="#dcdbd6" /></svg>
              <button className="mr-auto h-[12px] w-[52px] rounded-tr-sm bg-[#dcdbd6] text-right font-bold leading-[12px]"><span className="pr-1">Hlavní okno</span></button>
              <div className="mb-px flex gap-[5px] pr-[3px]">
                <button aria-label="Seznam oken"><Svg w={5} h={7}><path d="M0 1.500h5" stroke="#111" /><path d="M0 3.500h5L2.500 6z" fill="#111" /></Svg></button>
                <button aria-label="Zavřít kartu"><Svg w={6} h={7}><path d="M0.500 1l5 5M5.500 1l-5 5" stroke="#111" /></Svg></button>
              </div>
            </div>
            <div className="min-h-0 flex-1 rounded-sm border-2 border-[#c4c2bb] bg-white">
              <div className="h-full border-2 border-[#77756f]"><ModelView /></div>
            </div>
            <DataPane />
          </div>
          <InfoPane />
        </div>
      </main>
      <footer className="h-[14px] shrink-0 bg-white pl-[2px] leading-[13px] text-[#5a1515]">Hotovo</footer>
      <SectionDialog />
    </div>
  );
};

export default App;
